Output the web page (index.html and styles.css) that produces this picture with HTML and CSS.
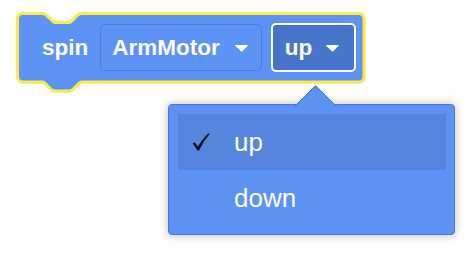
FILE: index.html
```html
<!DOCTYPE html>
<html>
<head>
<meta charset="utf-8">
<link rel="stylesheet" href="styles.css">
</head>
<body>
<div class="stage">
  <div class="block">
    <svg class="block-shape" width="344" height="76" viewBox="0 0 344 76">
      <path d="M 0,4 A 4,4 0 0 1 4,0 H 23 c 2.22,0 3.33,1.11 4.44,2.22 l 4.44,4.44 c 1.11,1.11 2.22,2.22 4.44,2.22 h 13.33 c 2.22,0 3.33,-1.11 4.44,-2.22 l 4.44,-4.44 c 1.11,-1.11 2.22,-2.22 4.44,-2.22 H 339.5 A 4,4 0 0 1 343.5,4 V 61.5 A 4,4 0 0 1 339.5,65.5 H 63 c -2.22,0 -3.33,1.11 -4.44,2.22 l -4.44,4.44 c -1.11,1.11 -2.22,2.22 -4.44,2.22 h -13.33 c -2.22,0 -3.33,-1.11 -4.44,-2.22 l -4.44,-4.44 c -1.11,-1.11 -2.22,-2.22 -4.44,-2.22 H 4 A 4,4 0 0 1 0,61.5 Z" fill="#5c93f5" stroke="#fde94c" stroke-width="6.5" stroke-linejoin="round" paint-order="stroke"/>
    </svg>
    <span class="label">spin</span>
    <div class="field">
      <span class="field-text">ArmMotor</span>
      <svg class="caret" width="15" height="8" viewBox="0 0 15 8"><path d="M2,1 H13 Q14.5,1 13.6,2 L8.5,7 Q7.5,8 6.5,7 L1.4,2 Q0.5,1 2,1 Z" fill="#fff"/></svg>
    </div>
    <div class="field active">
      <span class="field-text">up</span>
      <svg class="caret" width="15" height="8" viewBox="0 0 15 8"><path d="M2,1 H13 Q14.5,1 13.6,2 L8.5,7 Q7.5,8 6.5,7 L1.4,2 Q0.5,1 2,1 Z" fill="#fff"/></svg>
    </div>
  </div>
  <div class="menu">
    <div class="menu-items">
      <div class="item selected">
        <span class="check"><svg width="18" height="18" viewBox="0 0 18 18"><path d="M0.8,10.6 Q1.8,9.4 2.8,9.6 L5.9,13.6 Q10,6.5 16.2,0.6 Q17.2,0.3 17.6,1 Q11.5,7.5 7.6,16.6 Q7,17.8 5.9,17.6 Q5.2,17.4 4.8,16.6 Z" fill="#111"/></svg></span>
        <span class="item-text">up</span>
      </div>
      <div class="item"><span class="check"></span><span class="item-text">down</span></div>
    </div>
  </div>
</div>
</body>
</html>
```
FILE: styles.css
```css
html, body {
  margin: 0;
  padding: 0;
  background: #ffffff;
}
.stage {
  width: 474px;
  height: 256px;
  overflow: hidden;
  padding-top: 15px;
  box-sizing: border-box;
  font-family: "Liberation Sans", Arial, sans-serif;
}
.block {
  position: relative;
  margin-left: 19px;
  width: 343.5px;
  height: 65.5px;
  display: flex;
  align-items: center;
  padding-left: 23px;
  box-sizing: border-box;
}
.block-shape {
  position: absolute;
  left: 0;
  top: 0;
  overflow: visible;
  z-index: 0;
}
.label {
  position: relative;
  color: #ffffff;
  font-weight: bold;
  font-size: 22.5px;
  margin-right: 12px;
}
.field {
  position: relative;
  display: flex;
  align-items: center;
  box-sizing: border-box;
  height: 47px;
  border: 1px solid #4b7edb;
  border-radius: 5px;
  padding: 0 12px 0 11px;
  margin-right: 9px;
  gap: 14px;
}
.field.active {
  height: 49px;
  border: 2px solid #ffffff;
  background: #4775cc;
  padding: 0 14px 0 12px;
  gap: 13px;
  margin-right: 0;
}
.field-text {
  color: #ffffff;
  font-weight: bold;
  font-size: 22.5px;
}
.caret {
  display: block;
}
.menu {
  position: relative;
  margin-left: 168px;
  margin-top: 23.5px;
  width: 287px;
  box-sizing: border-box;
  background: #5c93f5;
  border: 1px solid #4877cc;
  border-radius: 4px;
  padding: 9px 8px 8px 9px;
  box-shadow: 0 0 10px 1px rgba(0, 0, 0, 0.22);
}
.menu::before {
  content: "";
  position: absolute;
  left: 130.5px;
  top: -14.5px;
  width: 31px;
  height: 31px;
  box-sizing: border-box;
  background: #5c93f5;
  border-top: 1px solid #4877cc;
  border-left: 1px solid #4877cc;
  border-top-left-radius: 3px;
  transform: rotate(45deg);
}
.menu-items {
  position: relative;
  z-index: 1;
  background: #5c93f5;
}
.item {
  display: flex;
  align-items: center;
  height: 56px;
  padding-left: 14px;
  color: #ffffff;
  font-size: 26px;
}
.item.selected {
  background: #5585dd;
}
.check {
  width: 42px;
  height: 18px;
  display: flex;
  align-items: center;
}
.check svg {
  display: block;
}
.item-text {
  font-family: "Liberation Sans", Arial, sans-serif;
}
```
